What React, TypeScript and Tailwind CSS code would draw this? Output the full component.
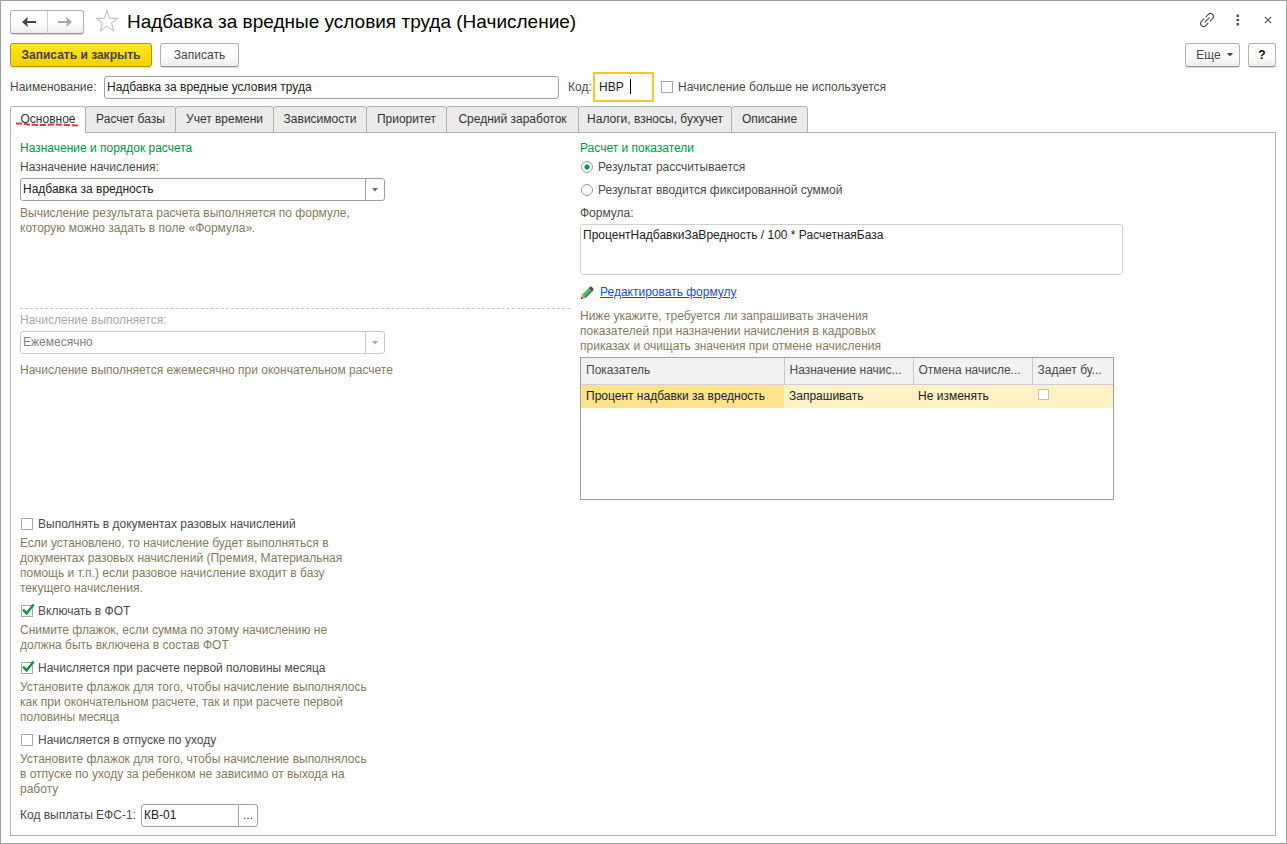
import { useState } from "react";
import type { ReactNode } from "react";

const tabs = [
  { title: "Основное", width: "w-[76px]" },
  { title: "Расчет базы", width: "w-[91px]" },
  { title: "Учет времени", width: "w-[99px]" },
  { title: "Зависимости", width: "w-[94px]" },
  { title: "Приоритет", width: "w-[81px]" },
  { title: "Средний заработок", width: "w-[133px]" },
  { title: "Налоги, взносы, бухучет", width: "w-[154px]" },
  { title: "Описание", width: "w-[77px]" },
];

const columns = [
  { title: "Показатель", width: "w-[203px]" },
  { title: "Назначение начис...", width: "w-[129px]" },
  { title: "Отмена начисле...", width: "w-[119px]" },
  { title: "Задает бу...", width: "w-[81px]" },
];

const buttonStyle =
  "h-6 rounded-[3px] border border-[#b0b0b0] border-b-[#979797] bg-linear-to-b from-white from-50% to-[#ececec] text-[#444] shadow-[0_1px_0_#d8d8d8]";

const Hint = ({ children }: { children: ReactNode }) => (
  <p className="whitespace-pre-line text-[#857b5c]">{children}</p>
);

const Caret = () => (
  <svg width="6" height="4" viewBox="0 0 6 4">
    <path d="M0 0H6L3 3.6Z" fill="currentColor" />
  </svg>
);

type CheckProps = { id: string; label: string; defaultChecked?: boolean };

const Check = ({ id, label, defaultChecked }: CheckProps) => (
  <div className="flex h-[15px] items-start">
    <span className="relative ml-px mr-[5px] mt-px flex size-3">
      <input
        id={id}
        type="checkbox"
        defaultChecked={defaultChecked}
        className="peer size-3 appearance-none border border-[#a6a6a6] bg-white"
      />
      <svg
        viewBox="0 0 14 14"
        className="pointer-events-none absolute -top-0.5 left-0 hidden size-3.5 peer-checked:block"
      >
        <path
          d="M2 6.6L5.6 10.4L12.6 1.6"
          fill="none"
          stroke="#009646"
          strokeWidth="2.4"
        />
      </svg>
    </span>
    <label htmlFor={id}>{label}</label>
  </div>
);

type RadioProps = { id: string; label: string; defaultChecked?: boolean };

const Radio = ({ id, label, defaultChecked }: RadioProps) => (
  <div className="flex h-[15px] items-start gap-[5px]">
    <input
      id={id}
      type="radio"
      name="result"
      defaultChecked={defaultChecked}
      className="ml-px mt-px size-3 appearance-none rounded-full border border-[#9a9a9a] bg-white checked:bg-[radial-gradient(circle,#009646_2px,transparent_3px)]"
    />
    <label htmlFor={id}>{label}</label>
  </div>
);

type SelectProps = { id: string; value: string; disabled?: boolean };

const Select = ({ id, value, disabled }: SelectProps) => (
  <div
    className={`relative mt-[3px] h-[23px] w-[365px] rounded-[3px] border ${
      disabled ? "border-[#c8c8c8] text-[#a8a8a8]" : "border-[#a0a0a0] text-[#666]"
    }`}
  >
    <select
      id={id}
      disabled={disabled}
      className={`h-full w-full appearance-none bg-transparent pl-0.5 opacity-100 ${
        disabled ? "text-[#808080]" : "text-[#222]"
      }`}
    >
      <option>{value}</option>
    </select>
    <span
      className={`pointer-events-none absolute inset-y-0 right-0 flex w-[19px] items-center justify-center border-l ${
        disabled ? "border-[#c8c8c8]" : "border-[#a0a0a0]"
      }`}
    >
      <Caret />
    </span>
  </div>
);

const TitleBar = () => (
  <header className="flex h-6 items-center">
    <div className="flex h-6 w-[74px] rounded-[3px] border border-[#b0b0b0] border-b-[#979797] bg-linear-to-b from-white from-50% to-[#ececec] shadow-[0_1px_0_#d8d8d8]">
      <button
        aria-label="Назад"
        className="flex flex-1 items-center justify-center border-r border-[#d0d0d0] text-[#444]"
      >
        <svg width="14" height="12" viewBox="0 0 14 12">
          <path d="M0 6L6 0.8L5 4.9H14V7.1H5L6 11.2Z" fill="currentColor" />
        </svg>
      </button>
      <button
        aria-label="Вперед"
        className="flex flex-1 items-center justify-center text-[#aaa]"
      >
        <svg width="14" height="12" viewBox="0 0 14 12">
          <path d="M14 6L8 0.8L9 4.9H0V7.1H9L8 11.2Z" fill="currentColor" />
        </svg>
      </button>
    </div>
    <button aria-label="В избранное" className="mb-0.5 ml-[11px]">
      <svg width="24" height="24" viewBox="0 0 24 24">
        <path
          d="M12 1.5L14.7 9.3H22.8L16.3 14.1L18.8 22L12 17.2L5.2 22L7.7 14.1L1.2 9.3H9.3Z"
          fill="white"
          stroke="#b4bac0"
        />
      </svg>
    </button>
    <h1 className="ml-2 flex-1 text-[19px] leading-6 text-black">
      Надбавка за вредные условия труда (Начисление)
    </h1>
    <div className="flex h-5 items-center self-start text-[#555]">
      <button aria-label="Ссылка">
        <svg
          width="18"
          height="18"
          viewBox="0 0 24 24"
          fill="none"
          stroke="currentColor"
          strokeWidth="1.6"
          strokeLinecap="round"
        >
          <g transform="rotate(-45 12 12)">
            <path d="M10 8H5.500a4 4 0 0 0 0 8H10" />
            <path d="M14 8h4.500a4 4 0 0 1 0 8H14" />
            <path d="M8 12h8" />
          </g>
        </svg>
      </button>
      <button aria-label="Меню" className="ml-5">
        <svg width="4" height="12" viewBox="0 0 4 12" fill="currentColor">
          <rect x="0.5" y="0.5" width="2.6" height="2.6" rx="0.6" />
          <rect x="0.5" y="4.7" width="2.6" height="2.6" rx="0.6" />
          <rect x="0.5" y="8.9" width="2.6" height="2.6" rx="0.6" />
        </svg>
      </button>
      <button aria-label="Закрыть" className="ml-6 mr-1">
        <svg width="8" height="8" viewBox="0 0 8 8">
          <path
            d="M0.8 0.8L7.2 7.2M7.2 0.8L0.8 7.2"
            stroke="currentColor"
            strokeWidth="1.2"
          />
        </svg>
      </button>
    </div>
  </header>
);

const CommandBar = () => (
  <div className="mt-[9px] flex h-6 gap-2">
    <button className="h-6 w-[142px] rounded-[3px] border border-[#b39a00] bg-linear-to-b from-[#ffe820] to-[#f2d000] font-bold text-[#444] shadow-[0_1px_0_#d8d8d8]">
      Записать и закрыть
    </button>
    <button className={`w-[79px] ${buttonStyle}`}>Записать</button>
    <button
      className={`ml-auto flex w-[55px] items-center justify-center gap-1.5 pl-1 ${buttonStyle}`}
    >
      Еще
      <Caret />
    </button>
    <button className={`w-7 font-bold ${buttonStyle}`}>
      <span className="text-black">?</span>
    </button>
  </div>
);

const NameRow = () => (
  <div className="mt-[5px] flex h-[30px] items-center">
    <label htmlFor="name" className="w-[94px]">
      Наименование:
    </label>
    <input
      id="name"
      defaultValue="Надбавка за вредные условия труда"
      className="h-[23px] w-[455px] rounded-[3px] border border-[#a0a0a0] px-0.5 text-[#222]"
    />
    <label htmlFor="code" className="ml-[9px] w-[25px]">
      Код:
    </label>
    <div className="relative h-[30px] w-[61px] border-2 border-[#fac81e]">
      <input
        id="code"
        defaultValue="НВР"
        className="h-full w-full px-1 text-[#222] outline-none"
      />
      <span className="absolute left-[35px] top-[5px] h-[15px] w-px bg-black" />
    </div>
    <div className="ml-1.5">
      <Check id="unused" label="Начисление больше не используется" />
    </div>
  </div>
);

const IndicatorTable = () => (
  <div className="mt-[3px] h-[143px] w-[534px] border border-[#a0a0a0]">
    <table className="w-full table-fixed border-collapse text-left">
      <thead>
        <tr className="h-[26px] border-b border-[#d0d0d0] bg-[#f2f2f2]">
          {columns.map((column) => (
            <th
              key={column.title}
              className={`whitespace-nowrap border-r border-[#c8c8c8] pl-[5px] font-normal last:border-r-0 ${column.width}`}
            >
              {column.title}
            </th>
          ))}
        </tr>
      </thead>
      <tbody>
        <tr className="h-6 bg-[#fef1c6] text-[#222]">
          <td className="bg-[#fde38c] px-[5px]">Процент надбавки за вредность</td>
          <td className="px-[5px]">Запрашивать</td>
          <td className="px-[5px]">Не изменять</td>
          <td className="px-1.5 pb-1">
            <input
              type="checkbox"
              aria-label="Задает будущее значение"
              className="block size-[11px] appearance-none border border-[#c0c0c0] bg-white"
            />
          </td>
        </tr>
      </tbody>
    </table>
  </div>
);

const PurposeColumn = () => (
  <section className="flex w-[550px] shrink-0 flex-col">
    <h2 className="text-[#009646]">Назначение и порядок расчета</h2>
    <label htmlFor="purpose" className="mt-1">
      Назначение начисления:
    </label>
    <Select id="purpose" value="Надбавка за вредность" />
    <div className="mt-[5px] h-[103px] border-b border-dashed border-[#c4c4c4]">
      <Hint>
        {"Вычисление результата расчета выполняется по формуле,\nкоторую можно задать в поле «Формула»."}
      </Hint>
    </div>

    <label htmlFor="period" className="mt-1 text-[#a8a8a8]">
      Начисление выполняется:
    </label>
    <Select id="period" value="Ежемесячно" disabled />
    <div className="mt-[9px] h-[154px]">
      <Hint>Начисление выполняется ежемесячно при окончательном расчете</Hint>
    </div>

    <div className="flex flex-col gap-2">
      <div className="flex flex-col gap-1">
        <Check id="single" label="Выполнять в документах разовых начислений" />
        <Hint>
          {"Если установлено, то начисление будет выполняться в\nдокументах разовых начислений (Премия, Материальная\nпомощь и т.п.) если разовое начисление входит в базу\nтекущего начисления."}
        </Hint>
      </div>
      <div className="flex flex-col gap-1">
        <Check id="fot" label="Включать в ФОТ" defaultChecked />
        <Hint>
          {"Снимите флажок, если сумма по этому начислению не\nдолжна быть включена в состав ФОТ"}
        </Hint>
      </div>
      <div className="flex flex-col gap-1">
        <Check
          id="half"
          label="Начисляется при расчете первой половины месяца"
          defaultChecked
        />
        <Hint>
          {"Установите флажок для того, чтобы начисление выполнялось\nкак при окончательном расчете, так и при расчете первой\nполовины месяца"}
        </Hint>
      </div>
      <div className="flex flex-col gap-1">
        <Check id="leave" label="Начисляется в отпуске по уходу" />
        <Hint>
          {"Установите флажок для того, чтобы начисление выполнялось\nв отпуске по уходу за ребенком не зависимо от выхода на\nработу"}
        </Hint>
      </div>
    </div>
    <div className="mt-[7px] flex h-[23px] items-center">
      <label htmlFor="efs" className="w-[121px]">
        Код выплаты ЕФС-1:
      </label>
      <div className="flex h-full w-[117px] rounded-[3px] border border-[#a0a0a0]">
        <input
          id="efs"
          defaultValue="КВ-01"
          className="min-w-0 flex-1 px-0.5 text-[#222]"
        />
        <button
          aria-label="Выбрать код"
          className="w-[19px] border-l border-[#a0a0a0]"
        >
          ...
        </button>
      </div>
    </div>
  </section>
);

const FormulaColumn = () => (
  <section className="flex min-w-0 flex-1 flex-col">
    <h2 className="text-[#009646]">Расчет и показатели</h2>
    <div className="mt-1 flex flex-col gap-2">
      <Radio id="calculated" label="Результат рассчитывается" defaultChecked />
      <Radio id="fixed" label="Результат вводится фиксированной суммой" />
      <label htmlFor="formula">Формула:</label>
    </div>
    <textarea
      id="formula"
      readOnly
      defaultValue="ПроцентНадбавкиЗаВредность / 100 * РасчетнаяБаза"
      className="mt-[3px] h-[51px] w-[543px] resize-none rounded-[3px] border border-[#d0d0d0] px-0.5 py-[3px] text-[#222]"
    />
    <div className="mt-[10px] flex h-[15px] items-center gap-1.5">
      <svg width="14" height="14" viewBox="0 0 14 14">
        <path d="M0.8 13.2L2 8.4L5.6 12Z" fill="#d99a62" />
        <path d="M0.8 13.2L1.4 10.9L3.1 12.6Z" fill="#333" />
        <path d="M2 8.4L8.4 2.2L12 5.8L5.600 12Z" fill="#5cba62" />
        <path d="M4.200 10.600L10.600 4.400L12 5.800L5.600 12Z" fill="#3f8f4c" />
        <path
          d="M8.4 2.2L10 0.8Q11 0.2 11.900 1L13.200 2.300Q14 3.200 13.400 4.200L12 5.800Z"
          fill="#4a5560"
        />
      </svg>
      <a href="#formula" className="text-[#1a4fc0] underline">
        Редактировать формулу
      </a>
    </div>
    <div className="mt-[9px]">
      <Hint>
        {"Ниже укажите, требуется ли запрашивать значения\nпоказателей при назначении начисления в кадровых\nприказах и очищать значения при отмене начисления"}
      </Hint>
    </div>
    <IndicatorTable />
  </section>
);

export default function App() {
  const [active, setActive] = useState(0);

  return (
    <div className="flex min-h-screen flex-col border border-[#a0a0a0] bg-white pb-[7px] pl-[9px] pr-2.5 pt-[9px] font-['Liberation_Sans',Arial,sans-serif] text-[12px] leading-[15px] text-[#4a4a4a]">
      <TitleBar />
      <CommandBar />
      <NameRow />

      <nav role="tablist" className="mt-1 flex">
        {tabs.map((tab, index) => (
          <button
            key={tab.title}
            role="tab"
            aria-selected={index === active}
            onClick={() => setActive(index)}
            className={`relative -mb-px h-[27px] whitespace-nowrap rounded-t-[3px] border border-[#b0b0b0] text-[#333] not-first:-ml-px ${
              tab.width
            } ${index === active ? "z-10 border-b-white bg-white" : "bg-[#ebebeb]"}`}
          >
            {tab.title}
            {index === active && (
              <svg
                viewBox="0 0 62 5"
                className="absolute bottom-[5px] left-[5px] h-[5px] w-[62px]"
              >
                <path
                  d="M0 1.5H7L12 2.5L24 3L40 2.5L62 3.5"
                  fill="none"
                  stroke="#f03040"
                  strokeWidth="2"
                  strokeDasharray="6 2"
                />
              </svg>
            )}
          </button>
        ))}
      </nav>

      <main className="flex flex-1 gap-2.5 border border-[#b0b0b0] px-[9px] pb-2 pt-2">
        <PurposeColumn />
        <FormulaColumn />
      </main>
    </div>
  );
}
